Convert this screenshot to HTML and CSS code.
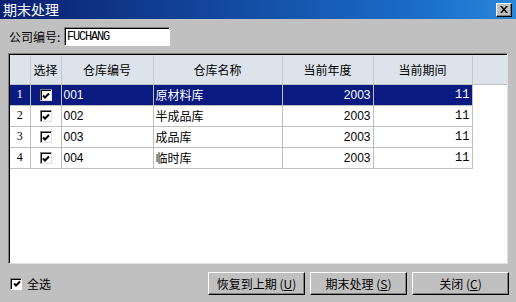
FILE: index.html
```html
<!DOCTYPE html>
<html>
<head>
    <meta charset="utf-8" />
    <title>期末处理</title>
    <link rel="stylesheet" href="styles.css">
</head>
<body>
    <div class="window">
        <div class="titlebar">
            <span class="title">期末处理</span>
            <span class="close-btn">
                <svg width="8" height="7" viewBox="0 0 8 7"><path d="M0 0h2l2 2.5L6 0h2L5 3.5 8 7H6L4 4.5 2 7H0l3-3.5z" fill="#000"/></svg>
            </span>
        </div>
        <div class="company-row">
            <label class="label">公司编号:</label>
            <div class="textbox">FUCHANG</div>
        </div>
        <div class="grid">
            <table class="grid-table">
                <colgroup>
                    <col style="width:20px">
                    <col style="width:31px">
                    <col style="width:92px">
                    <col style="width:129px">
                    <col style="width:91px">
                    <col style="width:99px">
                    <col>
                </colgroup>
                <thead>
                    <tr>
                        <th></th>
                        <th>选择</th>
                        <th>仓库编号</th>
                        <th>仓库名称</th>
                        <th>当前年度</th>
                        <th>当前期间</th>
                        <th class="filler"></th>
                    </tr>
                </thead>
                <tbody>
                    <tr class="selected">
                        <td class="rownum">1</td>
                        <td class="check-cell"><span class="check"><svg width="8" height="8" viewBox="0 0 8 8"><polyline points="1,3.5 3,5.5 7,1.5" fill="none" stroke="#000" stroke-width="2"/></svg></span></td>
                        <td>001</td>
                        <td>原材料库</td>
                        <td class="num">2003</td>
                        <td class="num period">11</td>
                        <td class="blank"></td>
                    </tr>
                    <tr>
                        <td class="rownum">2</td>
                        <td class="check-cell"><span class="check"><svg width="8" height="8" viewBox="0 0 8 8"><polyline points="1,3.5 3,5.5 7,1.5" fill="none" stroke="#000" stroke-width="2"/></svg></span></td>
                        <td>002</td>
                        <td>半成品库</td>
                        <td class="num">2003</td>
                        <td class="num period">11</td>
                        <td class="blank"></td>
                    </tr>
                    <tr>
                        <td class="rownum">3</td>
                        <td class="check-cell"><span class="check"><svg width="8" height="8" viewBox="0 0 8 8"><polyline points="1,3.5 3,5.5 7,1.5" fill="none" stroke="#000" stroke-width="2"/></svg></span></td>
                        <td>003</td>
                        <td>成品库</td>
                        <td class="num">2003</td>
                        <td class="num period">11</td>
                        <td class="blank"></td>
                    </tr>
                    <tr>
                        <td class="rownum">4</td>
                        <td class="check-cell"><span class="check"><svg width="8" height="8" viewBox="0 0 8 8"><polyline points="1,3.5 3,5.5 7,1.5" fill="none" stroke="#000" stroke-width="2"/></svg></span></td>
                        <td>004</td>
                        <td>临时库</td>
                        <td class="num">2003</td>
                        <td class="num period">11</td>
                        <td class="blank"></td>
                    </tr>
                </tbody>
            </table>
        </div>
        <div class="footer">
            <label class="select-all">
                <span class="check"><svg width="8" height="8" viewBox="0 0 8 8"><polyline points="1,3.5 3,5.5 7,1.5" fill="none" stroke="#000" stroke-width="2"/></svg></span>
                <span>全选</span>
            </label>
            <div class="buttons">
                <button class="btn">恢复到上期 (<u>U</u>)</button>
                <button class="btn">期末处理 (<u>S</u>)</button>
                <button class="btn">关闭 (<u>C</u>)</button>
            </div>
        </div>
    </div>
</body>
</html>
```

FILE: styles.css
```css
*, *:before, *:after{
    box-sizing:border-box;
}
html, body{
    margin:0;
    padding:0;
}
body{
    width:516px;
    height:302px;
    overflow:hidden;
    background:#c0c0c0;
    font-family:"Liberation Sans", "Noto Sans CJK SC", sans-serif;
    font-size:12px;
    color:#000;
}
.window{
    display:flex;
    flex-direction:column;
    height:302px;
}
.titlebar{
    height:19px;
    display:flex;
    align-items:center;
    padding:0 4px 0 3px;
    background:linear-gradient(to right, #0a2070, #1a6cc8 80%, #2a86d8);
}
.title{
    color:#fff;
    font-size:14px;
    font-family:"Noto Sans CJK SC", sans-serif;
    line-height:19px;
}
.close-btn{
    margin-left:auto;
    width:16px;
    height:14px;
    display:flex;
    align-items:center;
    justify-content:center;
    background:#c0c0c0;
    border:1px solid;
    border-color:#fff #000 #000 #fff;
    box-shadow:inset -1px -1px #808080;
}
.company-row{
    display:flex;
    align-items:center;
    margin-top:8px;
    padding-left:9px;
}
.label{
    font-family:"Noto Sans CJK SC", sans-serif;
    font-size:12px;
    width:55px;
}
.textbox{
    width:106px;
    height:19px;
    background:#fff;
    border:1px solid;
    border-color:#808080 #fff #fff #808080;
    box-shadow:inset 1px 1px #000;
    padding:2px 0 0 2px;
    font-family:"Liberation Mono", monospace;
    font-size:12px;
    letter-spacing:-1.2px;
    line-height:14px;
}
.grid{
    margin:7px 8px 0 8px;
    height:211px;
    background:#fff;
    border:1px solid;
    border-color:#808080 #dfdfdf #dfdfdf #808080;
    box-shadow:inset 1px 1px #000;
    padding:1px 0 0 1px;
}
.grid-table{
    width:100%;
    border-collapse:collapse;
    table-layout:fixed;
}
.grid-table th{
    height:29px;
    background:#dce3eb;
    font-weight:normal;
    font-family:"Noto Sans CJK SC", sans-serif;
    font-size:12px;
    border-right:1px solid #c4c8cc;
    border-bottom:1px solid #c0c0c0;
    text-align:center;
    padding:0;
}
.grid-table th.filler{
    border-right:none;
}
.grid-table td{
    height:21px;
    padding:0 2px;
    border-right:1px solid #c0c0c0;
    border-bottom:1px solid #c0c0c0;
    white-space:nowrap;
    font-family:"Liberation Sans", "Noto Sans CJK SC", sans-serif;
}
.grid-table td.blank{
    border:none;
}
.grid-table .rownum{
    text-align:center;
    font-family:"Liberation Serif", serif;
    font-size:12px;
}
.grid-table .num{
    text-align:right;
}
.grid-table .period{
    font-family:"Liberation Mono", monospace;
    font-size:12px;
}
.check-cell{
    text-align:center;
}
.selected td{
    background:#0a1a80;
    color:#fff;
}
.selected td.blank{
    background:#fff;
}
.check{
    display:inline-flex;
    align-items:center;
    justify-content:center;
    width:12px;
    height:12px;
    background:#fff;
    border:1px solid;
    border-color:#808080 #fff #fff #808080;
    box-shadow:inset 1px 1px #000;
    vertical-align:middle;
    padding:1px 0 0 1px;
}
.check-cell .check{
    border-color:#808080 #dfdfdf #dfdfdf #808080;
}
.footer{
    display:flex;
    align-items:center;
    margin-top:8px;
    padding:0 7px 0 10px;
}
.select-all{
    display:flex;
    align-items:center;
    gap:5px;
    font-family:"Noto Sans CJK SC", sans-serif;
    font-size:12px;
}
.buttons{
    margin-left:auto;
    display:flex;
    gap:5px;
}
.btn{
    width:97px;
    height:23px;
    background:#c0c0c0;
    border:1px solid;
    border-color:#fff #000 #000 #fff;
    box-shadow:inset -1px -1px #808080;
    font-family:"Noto Sans CJK SC", sans-serif;
    font-size:12px;
    padding:0;
    color:#000;
}
```
